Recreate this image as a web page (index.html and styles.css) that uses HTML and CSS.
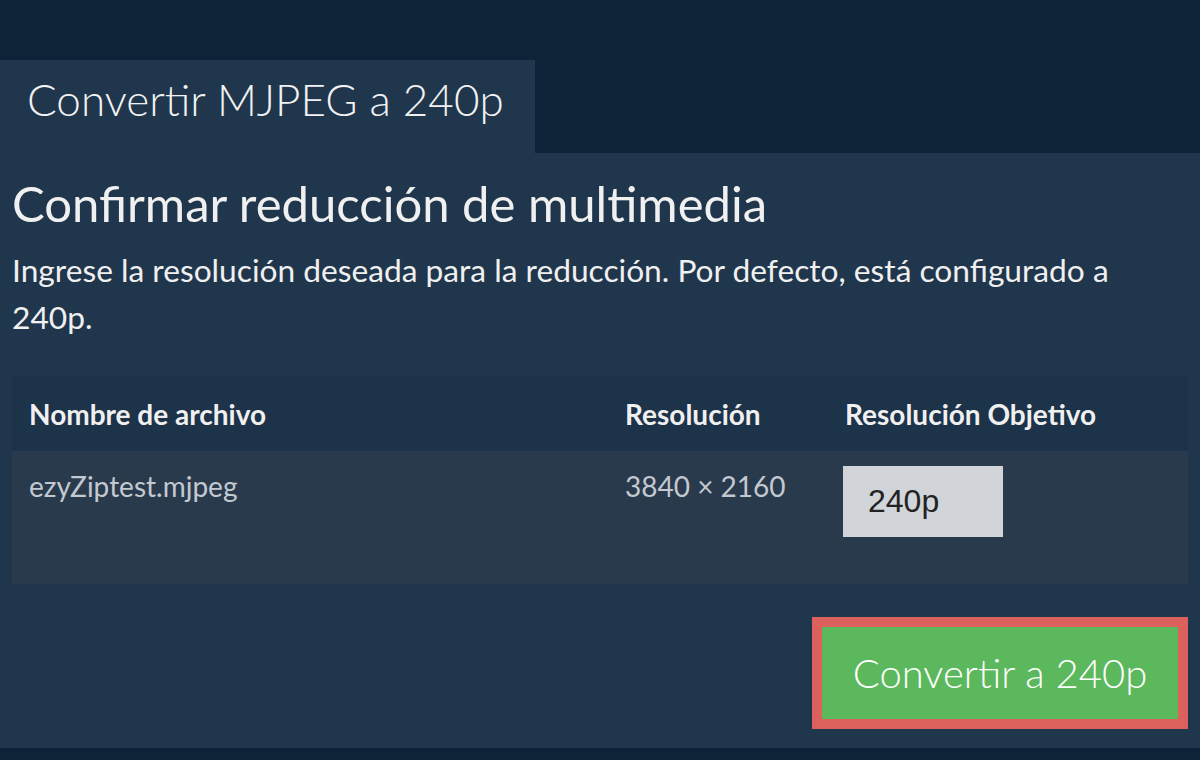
FILE: index.html
```html
<!DOCTYPE html>
<html>
<head>
	<title>Convertir MJPEG a 240p</title>
	<meta charset="utf-8">
	<link rel="stylesheet" href="styles.css">
</head>
<body>
<div class="page">
	<!-- pestaña -->
	<div class="tabs">
		<div class="tab">Convertir MJPEG a 240p</div>
	</div>

	<!-- panel principal -->
	<div class="panel">
		<h2>Confirmar reducción de multimedia</h2>
		<p class="intro">Ingrese la resolución deseada para la reducción. Por defecto, está configurado a 240p.</p>

		<table class="files">
			<thead>
				<tr>
					<th class="c-name">Nombre de archivo</th>
					<th class="c-res">Resolución</th>
					<th class="c-target">Resolución Objetivo</th>
				</tr>
			</thead>
			<tbody>
				<tr>
					<td>ezyZiptest.mjpeg</td>
					<td>3840 × 2160</td>
					<td class="target"><input class="res-input" type="text" value="240p"></td>
				</tr>
			</tbody>
		</table>

		<div class="actions">
			<button class="btn-convert" type="button">Convertir a 240p</button>
		</div>
	</div>
</div>
</body>
</html>
```

FILE: styles.css
```css
body, h2, p, table { margin: 0; padding: 0; }
body { background-color: #0f2338; font-family: Lato, "Noto Sans", sans-serif; color: #f0f0f0; }

.page { padding-top: 60px; }
.tabs { display: flex; }
.tab { width: 535px; height: 93px; box-sizing: border-box; padding: 13px 0 0 27px; background-color: #20364d; font-size: 44px; font-weight: 300; color: #f2f2f2; }

.panel { background-color: #20364d; padding: 20px 12px 0; height: 595px; box-sizing: border-box; }
.panel h2 { font-size: 49px; font-weight: 400; line-height: 60px; color: #f0f0f0; }
.intro { font-size: 31.7px; line-height: 47px; margin-top: 14px; color: #f0f0f0; }

.files { width: 100%; border-collapse: collapse; table-layout: fixed; margin-top: 35px; }
.files th { box-sizing: border-box; background-color: #1d3349; height: 75px; text-align: left; font-size: 28px; font-weight: 700; color: #f0f0f0; padding: 0 17px; }
.files td { box-sizing: border-box; background-color: #2a3a4d; height: 133px; vertical-align: top; padding: 18px 17px 0; font-size: 28px; color: #c3c9d0; }
.files .c-name { width: 596px; }
.files .c-res { width: 220px; }
.files .target { padding-top: 15px; padding-left: 15px; }
.res-input { display: block; width: 160px; height: 71px; box-sizing: border-box; border: 0; outline: none; background-color: #d1d5da; padding: 0 25px; font-family: "Liberation Sans", Arial, sans-serif; font-size: 32px; color: #222; }

.actions { display: flex; justify-content: flex-end; margin-top: 33px; }
.btn-convert { width: 376px; height: 112px; border: 10px solid #dc605c; background-color: #5cb85c; color: #fff; font-family: Lato, "Noto Sans", sans-serif; font-size: 40px; font-weight: 300; }
```
